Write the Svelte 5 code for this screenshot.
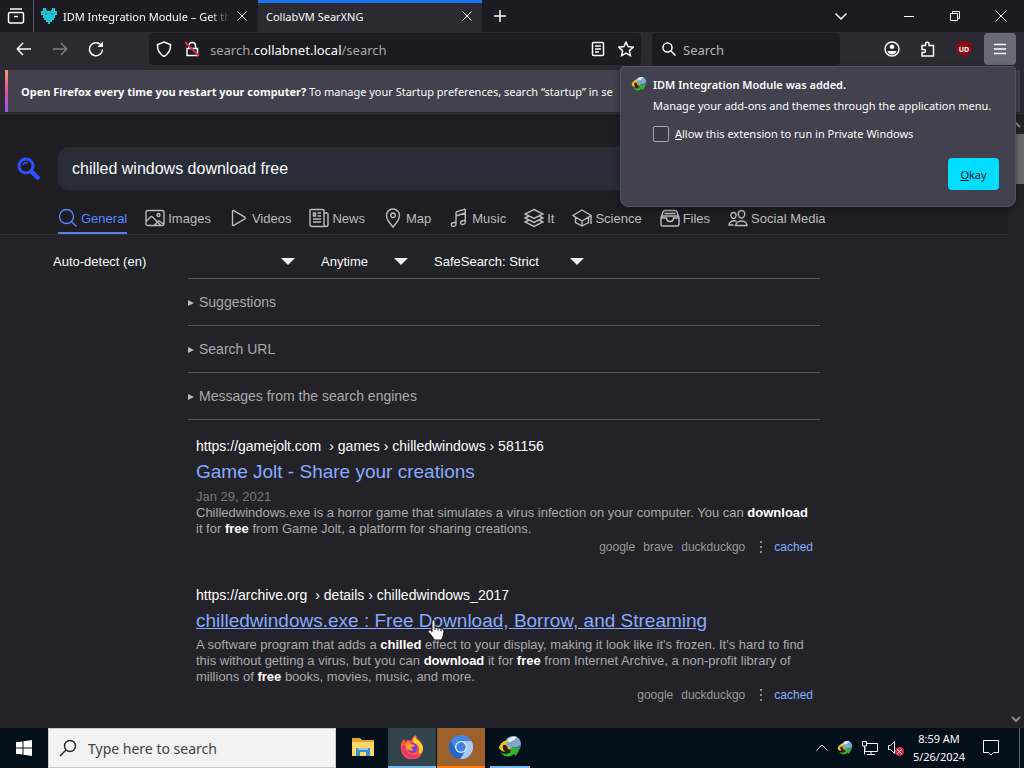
<script lang="ts">
  const categories = [
    { id: 'general', label: 'General' },
    { id: 'images', label: 'Images' },
    { id: 'videos', label: 'Videos' },
    { id: 'news', label: 'News' },
    { id: 'map', label: 'Map' },
    { id: 'music', label: 'Music' },
    { id: 'it', label: 'It' },
    { id: 'science', label: 'Science' },
    { id: 'files', label: 'Files' },
    { id: 'social', label: 'Social Media' }
  ];

  // stroke paths on a 20x20 grid
  const icons: Record<string, string> = {
    general: 'M8.5 1.5a7 7 0 1 0 0 14a7 7 0 0 0 0-14zM13.5 13.5l5 5',
    images: 'M3 2.5h14q2 0 2 2v11q0 2-2 2H3q-2 0-2-2v-11q0-2 2-2zM13.5 5.5a1.5 1.5 0 1 0 0 3a1.5 1.5 0 0 0 0-3zM1.5 13l4-4q1-1 2 0l8 8M9 17.500l4-4q1-1 2 0l4 3',
    videos: 'M3.500 3.500v13q0 1.500 1.300.8l11-6.500q1-.8 0-1.600l-11-6.500Q3.500 2 3.500 3.500z',
    news: 'M15 18.500H3q-2 0-2-2v-14q0-1 1-1h12q1 0 1 1v14q0 2 2 2t2-2V6q0-1-1-1h-3M8.500 5H12M8.500 8H12M4 11h8M4 14h8M4.500 5h2v3h-2z',
    map: 'M10 1C6 1 3.500 4 3.500 7.300C3.500 12 10 19 10 19s6.500-7 6.500-11.700C16.500 4 14 1 10 1zM10 5a2.300 2.300 0 1 0 0 4.600A2.300 2.300 0 0 0 10 5z',
    music: 'M7 16V5q0-1 1-1.300l7.500-2.400q.8-.2.8.6V14M7 8l9.300-3M7 16q0 2-2 2.400T2.300 17T4.500 14.800L7 14M16.300 14q0 2-2 2.400T11.600 15T13.800 12.800L16.300 12',
    it: 'M10 1.500L19 6L10 10.500L1 6zM4 8.500L1 10l9 4.500L19 10l-3-1.500M4 12.500L1 14l9 4.500l9-4.500l-3-1.500',
    science: 'M1 7.500L10 2l9 5.500L10 13zM3.500 9v5.500L10 18l6.500-3.500V9M19 7.500V16M10 13v5',
    files: 'M3 8h14q2 0 2 2v6q0 2-2 2H3q-2 0-2-2v-6q0-2 2-2zM1 10h5.500q0 3.500 3.500 3.500t3.500-3.500H19M1 10l2-6q.5-1.500 2-1.500h10q1.500 0 2 1.500l2 6M4.500 5.500h11',
    social: 'M13.500 2.500c-2 0-3.300 1.500-3.200 3.500s1.500 4 3.200 4s3-2 3.200-4s-1.200-3.500-3.200-3.500zM7.500 17.500h11.500c0-3-3-4.500-5.500-4.500s-5.500 1.500-6 4.500zM5.500 4.500c-1.700 0-2.700 1.200-2.600 2.800S4.200 10.500 5.500 10.500s2.500-1.600 2.600-3.200S7.200 4.500 5.500 4.500zM8.500 13.300C5 12 1 13.500 1 17h4.500'
  };

  const details = ['Suggestions', 'Search URL', 'Messages from the search engines'];

  const results = [
    {
      host: 'https://gamejolt.com',
      path: '› games › chilledwindows › 581156',
      title: 'Game Jolt - Share your creations',
      date: 'Jan 29, 2021',
      hovered: false,
      text: [
        ['Chilledwindows.exe is a horror game that simulates a virus infection on your computer. You can ', '*download'],
        ['it for ', '*free', ' from Game Jolt, a platform for sharing creations.']
      ],
      engines: ['google', 'brave', 'duckduckgo']
    },
    {
      host: 'https://archive.org',
      path: '› details › chilledwindows_2017',
      title: 'chilledwindows.exe : Free Download, Borrow, and Streaming',
      date: '',
      hovered: true,
      text: [
        ['A software program that adds a ', '*chilled', " effect to your display, making it look like it's frozen. It's hard to find"],
        ['this without getting a virus, but you can ', '*download', ' it for ', '*free', ' from Internet Archive, a non-profit library of'],
        ['millions of ', '*free', ' books, movies, music, and more.']
      ],
      engines: ['google', 'duckduckgo']
    }
  ];

  let query = 'chilled windows download free';
  let allowPrivate = false;
</script>

{#snippet idm(size: number)}
  <svg width={size} height={size} viewBox="0 0 24 24">
    <circle cx="15" cy="9" r="8" fill="#7fa6cc" />
    <path d="M9 5q5-5 10-3q-4 5-9 5z" fill="#e8f1fa" />
    <path d="M14 12q6 1 9-3q0 5-5 8q-3 0-4-5z" fill="#426d9c" />
    <path d="M1 12Q4 5 11 5q-3 2-3 5l6 4l-4 3Q1 17 1 12z" fill="#f0c51d" />
    <path d="M5 10q4-1 5 4l4 1l-5 3q-5-2-4-8z" fill="#34230b" />
    <path d="M2 17q6 4 12-1l-2-3l10 0l-4 8l-2-2q-7 6-14-2z" fill="#2fb72c" />
  </svg>
{/snippet}

{#snippet cross()}
  <svg class="line" width="12" height="12" viewBox="0 0 12 12"><path d="M1.500 1.500l9 9M10.500 1.500l-9 9" /></svg>
{/snippet}

<div class="desktop">
  <header class="tabbar">
    <button class="view" aria-label="Firefox View">
      <svg class="line thick" width="18" height="18" viewBox="0 0 18 18"><path d="M3 2h12M3 5.500h12q1.500 0 1.500 1.500v7q0 2-2 2h-11q-2 0-2-2V7q0-1.500 1.500-1.500zM7 9.500h4" /></svg>
    </button>
    <div class="tab">
      <svg width="16" height="16" viewBox="0 0 16 16"><path d="M2 0h3v2h1v1h4V2h1V0h3v3h2v4h-2v3h-1v2h-2v2h-2v2H7v-2H5v-2H3v-2H2V7H0V3h2z" fill="#1fc4cf" /><path d="M4 5h2v2H4zM10 5h2v2h-2z" fill="#138f9c" /></svg>
      <span class="tab-title fade">IDM Integration Module – Get th</span>
      <button aria-label="Close tab">{@render cross()}</button>
    </div>
    <div class="tab active">
      <span class="tab-title">CollabVM SearXNG</span>
      <button aria-label="Close tab">{@render cross()}</button>
    </div>
    <button class="new-tab" aria-label="New tab">
      <svg class="line thick" width="14" height="14" viewBox="0 0 14 14"><path d="M7 1v12M1 7h12" /></svg>
    </button>
    <div class="window-buttons">
      <button aria-label="List all tabs"><svg class="line thick" width="14" height="14" viewBox="0 0 14 14"><path d="M1.500 4.500L7 10l5.500-5.500" /></svg></button>
      <button aria-label="Minimize"><svg class="line" width="10" height="10" viewBox="0 0 10 10"><path d="M0 5.500h10" /></svg></button>
      <button aria-label="Restore"><svg class="line" width="12" height="12" viewBox="0 0 12 12"><path d="M1.500 3.500h7v7h-7zM3.500 3.500v-2h7v7h-2" /></svg></button>
      <button aria-label="Close"><svg class="line" width="12" height="12" viewBox="0 0 12 12"><path d="M.5.5l11 11M11.500.5l-11 11" /></svg></button>
    </div>
  </header>

  <div class="toolbar">
    <div class="nav-buttons">
      <button aria-label="Back"><svg class="line thick" width="16" height="16" viewBox="0 0 16 16"><path d="M15 8H1.500M7 2L1.200 8L7 14" /></svg></button>
      <button aria-label="Forward" disabled><svg class="line thick" width="16" height="16" viewBox="0 0 16 16"><path d="M1 8h13.500M9 2l5.800 6L9 14" /></svg></button>
      <button aria-label="Reload"><svg class="line thick" width="16" height="16" viewBox="0 0 16 16"><path d="M14.500 8.500a6.500 6.500 0 1 1-2-5l2 2" /><path d="M15 .5v5.500H9.500z" fill="#fbfbfe" stroke="none" /></svg></button>
    </div>
    <div class="urlbar">
      <svg class="line thick" width="16" height="16" viewBox="0 0 16 16"><path d="M8 1l6.500 2.500q.5 8-6.500 12q-7-4-6.500-12z" /></svg>
      <svg class="line" width="16" height="16" viewBox="0 0 16 16"><path class="thick" d="M3 7.500h10.500v7H3zM5 7V4.500q0-3 3.200-3t3.300 3V7" /><path d="M1 1l14 14" stroke="#e22850" stroke-width="2" /></svg>
      <span class="address">search.<b>collabnet.local</b>/search</span>
      <svg class="line thick" width="16" height="16" viewBox="0 0 16 16"><path d="M3.500 1.500h9q1 0 1 1v11q0 1-1 1h-9q-1 0-1-1v-11q0-1 1-1zM5 5h6M5 8h6M5 11h4" /></svg>
      <svg class="line thick" width="16" height="16" viewBox="0 0 16 16"><path d="M8 1l2.100 4.600l5 .6l-3.700 3.400l1 5L8 12.100l-4.400 2.500l1-5L.9 6.200l5-.6z" /></svg>
    </div>
    <label class="searchbar">
      <svg class="line thick" width="14" height="14" viewBox="0 0 14 14"><path d="M5.500 1a4.500 4.500 0 1 0 0 9a4.500 4.500 0 0 0 0-9zM9 9l4.500 4.500" /></svg>
      <input type="text" placeholder="Search" aria-label="Search" />
    </label>
    <div class="toolbar-end">
      <button aria-label="Account"><svg class="line thick" width="16" height="16" viewBox="0 0 16 16"><circle cx="8" cy="8" r="7" /><path d="M8 3.500a2.300 2.300 0 1 0 0 4.600a2.300 2.300 0 0 0 0-4.600zM3.500 10h9q-1 3.500-4.500 3.500T3.500 10z" fill="#fbfbfe" stroke="none" /></svg></button>
      <button aria-label="Extensions"><svg class="line thick" width="16" height="16" viewBox="0 0 16 16"><path d="M5.500 4.500V3q0-1.800 1.800-1.800T9 3v1.500h4.500v10.500H2v-3.500h2q1.500 0 1.500-1.500T4 8.500H2v-4z" /></svg></button>
      <button aria-label="uBlock Origin">
        <span class="ublock">UD</span>
      </button>
      <button class="menu" aria-label="Menu"><svg class="line thick" width="14" height="14" viewBox="0 0 14 14"><path d="M1 2.500h12M1 7h12M1 11.500h12" /></svg></button>
    </div>

    <section class="popup">
      {@render idm(16)}
      <div class="popup-body">
        <strong>IDM Integration Module was added.</strong>
        <p>Manage your add-ons and themes through the application menu.</p>
        <label><input type="checkbox" bind:checked={allowPrivate} /><span><u>A</u>llow this extension to run in Private Windows</span></label>
        <button class="okay"><span><u>O</u>kay</span></button>
      </div>
    </section>
  </div>

  <div class="infobar">
    <div class="message"><b>Open Firefox every time you restart your computer?</b> To manage your Startup preferences, search “startup” in se</div>
  </div>

  <div class="viewport">
    <div class="page">
      <div class="search-header">
        <div class="search-row">
          <svg width="24" height="24" viewBox="0 0 24 24" fill="none" stroke="#3050ff"><circle cx="9" cy="9" r="7" stroke-width="3" /><path d="M6 8q1-3 5-2.500" stroke-width="1.500" /><path d="M14.500 14.500l7.500 7.500" stroke-width="4.500" /></svg>
          <input type="text" aria-label="Search query" bind:value={query} />
        </div>
        <nav>
          {#each categories as cat}
            <a href="#{cat.id}" class:selected={cat.id === 'general'}>
              <svg width="20" height="20" viewBox="0 0 20 20"><path d={icons[cat.id]} /></svg>
              {cat.label}
            </a>
          {/each}
        </nav>
      </div>

      <div class="filters">
        <select class="language" aria-label="Language"><option>Auto-detect (en)</option></select>
        <select class="time" aria-label="Time range"><option>Anytime</option></select>
        <select class="safe" aria-label="SafeSearch"><option>SafeSearch: Strict</option></select>
      </div>

      <main>
        {#each details as item}
          <details><summary>{item}</summary></details>
        {/each}

        {#each results as result}
          <article>
            <a class="url" href="#result"><span>{result.host}</span><span>{result.path}</span></a>
            <h3 class:hovered={result.hovered}><a href="#result">{result.title}</a></h3>
            {#if result.date}<time>{result.date}</time>{/if}
            <p>
              {#each result.text as line}
                <span class="row">{#each line as part}{#if part[0] === '*'}<b>{part.slice(1)}</b>{:else}{part}{/if}{/each}</span>
              {/each}
            </p>
            <div class="engines">
              {#each result.engines as engine}<span>{engine}</span>{/each}
              <svg width="4" height="12" viewBox="0 0 4 12" fill="#8a8a90"><path d="M1 0h2v2H1zM1 5h2v2H1zM1 10h2v2H1z" /></svg>
              <a href="#cached">cached</a>
            </div>
          </article>
        {/each}
      </main>
    </div>
    <div class="scrollbar">
      <svg class="line" width="10" height="6" viewBox="0 0 10 6"><path d="M1 5l4-4l4 4" /></svg>
      <div class="thumb"></div>
      <svg class="line" width="10" height="6" viewBox="0 0 10 6"><path d="M1 1l4 4l4-4" /></svg>
    </div>
  </div>

  <footer class="taskbar">
    <button class="start" aria-label="Start"><svg width="16" height="16" viewBox="0 0 16 16" fill="#fff"><path d="M0 2.300L6.500 1.400V7.500H0zM7.500 1.200L16 0v7.500H7.500zM0 8.500h6.500v6.100L0 13.700zM7.500 8.500H16V16l-8.500-1.200z" /></svg></button>
    <label class="task-search">
      <svg width="18" height="18" viewBox="0 0 18 18" fill="none" stroke="#222" stroke-width="1.400"><circle cx="11" cy="7" r="5.500" /><path d="M7 11l-6 6" /></svg>
      <input type="text" placeholder="Type here to search" aria-label="Type here to search" />
    </label>
    <div class="apps">
      <button aria-label="File Explorer">
        <svg width="24" height="24" viewBox="0 0 24 24"><path d="M1 3h8l2 2h12v5H1z" fill="#e3a72f" /><path d="M1 7h22v14H1z" fill="#fbd867" /><path d="M5 13h14v8h-4v-4H9v4H5z" fill="#3c8fd0" /><path d="M7 13h10v2H7z" fill="#8cc8ec" /></svg>
      </button>
      <button class="firefox" aria-label="Firefox">
        <svg width="24" height="24" viewBox="0 0 24 24"><path d="M4 4l1 3q2-2 4-2l2 1q1-4 5-6q0 3 3 5q4 4 4 8A11 11 0 0 1 1 14q-1-6 3-10z" fill="#ff5a36" /><path d="M15 1q1 4 4 5q4 4 4 8q-1 6-6 8q3-4 2-9q-1-4-5-5q-2-3 1-7z" fill="#ffcd35" /><path d="M1.500 12q1 10 11 11.500q6 0 9-6q-5 4-10 2Q5 18 5 10q-2 0-3.500 2z" fill="#f0327c" /><circle cx="12.500" cy="13" r="5" fill="#7542d8" /><path d="M5 9q4-2 6 0l4 1q-1 3-4 2q0 2 3 3q-4 2-7-1z" fill="#ff9a2e" /></svg>
      </button>
      <button class="chromium" aria-label="Chromium">
        <svg width="24" height="24" viewBox="0 0 24 24"><circle cx="12" cy="12" r="12" fill="#4587e8" /><path d="M12 6h10.400A12 12 0 0 1 11 24l6-9z" fill="#a9cbfb" /><path d="M1.700 6A12 12 0 0 0 11 24l5-8l-9-1z" fill="#2765c9" /><circle cx="12" cy="12" r="6" fill="#dceafd" /><circle cx="12" cy="12" r="4.700" fill="#3f83e6" /></svg>
      </button>
      <button class="running" aria-label="Internet Download Manager">{@render idm(24)}</button>
    </div>
    <div class="tray">
      <svg class="line" width="14" height="14" viewBox="0 0 14 14"><path d="M1.500 9.500L7 4l5.500 5.500" /></svg>
      {@render idm(16)}
      <svg class="line" width="18" height="16" viewBox="0 0 18 16"><path d="M5 3.500h11.500v8H4V7M1.500 1.500h4V6h-4zM3.500 6v8.500M10 11.500v3M6 14.500h8" /></svg>
      <svg class="line" width="18" height="16" viewBox="0 0 18 16"><path d="M1.500 5.500h2l4-4v12l-4-4h-2z" /><circle cx="12.500" cy="11.500" r="4.500" fill="#d9304a" stroke="none" /><path d="M10.500 9.500l4 4M14.500 9.500l-4 4" /></svg>
      <time class="clock"><span>8:59 AM</span><span>5/26/2024</span></time>
      <svg class="line" width="18" height="18" viewBox="0 0 18 18"><path d="M1.500 1.500h15v12h-5L9 16l-2.500-2.500h-5z" /></svg>
    </div>
    <button class="show-desktop" aria-label="Show desktop"></button>
  </footer>

  <svg class="cursor" width="18" height="22" viewBox="0 0 18 22"><path d="M5 1.500q1.500-1.500 3 0V8l6.500 1.500q2.500.5 2.500 3l-1 5l-1.500 3.500H7L5.500 18L1 12.500q0-2.500 2.500-1.500L5 12.500z" fill="#fff" stroke="#111" /><path d="M8 8v3M11 9v2.500M14 10v2" stroke="#111" /></svg>
</div>

<style>
  :global(body) { margin: 0; background: #222228; }
  * { box-sizing: border-box; }
  button, input, select { font: inherit; color: inherit; border: 0; padding: 0; background: none; outline: none; }
  button { display: flex; align-items: center; justify-content: center; }
  svg { flex: none; }
  .line { fill: none; stroke: #fbfbfe; stroke-width: 1; }
  .thick { stroke-width: 1.5; }

  .desktop { position: relative; height: 100vh; display: flex; flex-direction: column; overflow: hidden; color: #fbfbfe; font-family: "Noto Sans", "Open Sans", sans-serif; font-size: 11px; }

  .tabbar { flex: none; height: 32px; display: flex; background: #1c1b22; }
  .view { width: 34px; padding-right: 1px; border-right: 1px solid #5b5b66; }
  .tab { width: 224px; display: flex; align-items: center; gap: 6px; padding: 0 10px 0 7px; }
  .tab.active { background: #2b2a33; border-top: 3px solid #1a73f0; padding: 0 9px 3px 8px; }
  .tab-title { flex: 1; min-width: 0; overflow: hidden; white-space: nowrap; }
  .fade { mask-image: linear-gradient(to right, #000 88%, transparent); }
  .new-tab { width: 36px; }
  .window-buttons { margin-left: auto; display: flex; }
  .window-buttons button { width: 46px; }
  .window-buttons button:first-child { margin-right: 22px; }

  .toolbar { position: relative; flex: none; height: 34px; display: flex; align-items: center; background: #2b2a33; }
  .nav-buttons { display: flex; padding-left: 6px; }
  .nav-buttons button { width: 36px; height: 32px; }
  .nav-buttons button:disabled { opacity: 0.4; }
  .urlbar { flex: 1; height: 32px; margin-left: 35px; padding: 0 7px; display: flex; align-items: center; gap: 12px; background: #1c1b22; border-radius: 4px; }
  .address { flex: 1; margin-left: -2px; padding-top: 1px; color: #a5a5ad; font-size: 13px; }
  .address b { color: #fbfbfe; font-weight: 400; }
  .searchbar { width: 188px; height: 32px; margin-left: 11px; padding: 0 10px; display: flex; align-items: center; gap: 7px; background: #1c1b22; border-radius: 4px; }
  .searchbar input { min-width: 0; flex: 1; padding-top: 1px; font-size: 13px; }
  .searchbar input::placeholder { color: #b4b4bc; opacity: 1; }
  .toolbar-end { display: flex; padding: 0 8px 0 34px; }
  .toolbar-end button { width: 36px; height: 32px; }
  .toolbar-end .menu { width: 32px; margin-left: 2px; background: #6a6a74; border-radius: 4px; }
  .ublock { width: 16px; height: 16px; display: flex; align-items: center; justify-content: center; background: #8d0b10; clip-path: polygon(50% 0, 100% 15%, 95% 70%, 50% 100%, 5% 70%, 0 15%); font-size: 7px; font-weight: 700; }

  .popup { position: absolute; z-index: 2; top: 34px; right: 8px; width: 396px; height: 141px; display: flex; gap: 6px; padding: 9px 11px 11px 10px; background: #42414d; border: 1px solid #53525e; border-radius: 4px 4px 8px 8px; box-shadow: 0 2px 6px rgba(0, 0, 0, 0.4); }
  .popup-body { flex: 1; display: flex; flex-direction: column; line-height: 17px; white-space: nowrap; }
  .popup strong { font-weight: 600; }
  .popup p { margin: 4px 0 11px; }
  .popup label { display: flex; align-items: center; gap: 6px; }
  .popup input { appearance: none; width: 16px; height: 16px; margin: 0; border: 1px solid #a4a4ac; border-radius: 2px; background: #3a3944; }
  .okay { align-self: flex-end; width: 51px; height: 32px; margin: 16px 5px 0 0; background: #0df; color: #15141a; border-radius: 4px; }

  .infobar { flex: none; padding: 4px 4px 3px 5px; background: #2b2a33; border-bottom: 1px solid #18181c; }
  .message { height: 42px; padding: 1px 0 0 13px; line-height: 41px; white-space: nowrap; overflow: hidden; background: #42414d; border-left: 3px solid; border-image: linear-gradient(#f0a070, #e0529c 50%, #9059ff) 1; }

  .viewport { flex: 1; min-height: 0; display: flex; font-family: "Liberation Sans", Arial, sans-serif; }
  .page { flex: 1; min-width: 0; overflow: hidden; background: #222228; }
  .search-header { background: #1e1e22; border-bottom: 1px solid #303036; padding-top: 31px; }
  .search-row { display: flex; align-items: center; gap: 17px; padding: 0 12px 0 17px; }
  .search-row input { flex: 1; height: 43px; padding: 0 14px; background: #282c37; border-radius: 10px; font-size: 16px; }
  nav { display: flex; gap: 18px; padding: 14px 0 0 58px; }
  nav a { height: 30px; display: flex; align-items: center; gap: 3px; color: #bbb; font-size: 13px; text-decoration: none; white-space: nowrap; border-bottom: 2px solid transparent; }
  nav svg { fill: none; stroke: #bbb; stroke-width: 1.4; }
  nav .selected { color: #58f; border-color: #5a80e8; }
  nav .selected svg { stroke: #58f; }

  .filters { display: flex; gap: 26px; padding: 16px 0 6px 53px; }
  .filters select { appearance: none; height: 21px; font-size: 13px; background: url("data:image/svg+xml,%3Csvg xmlns='http://www.w3.org/2000/svg' width='14' height='7'%3E%3Cpath d='M0 0h14L7 7z' fill='%23eee'/%3E%3C/svg%3E") no-repeat right center; }
  .language { width: 242px; }
  .time { width: 87px; }
  .safe { width: 150px; }

  main { max-width: 820px; padding-left: 188px; }
  details { height: 47px; border-top: 1px solid #55555b; color: #aaa; font-size: 14px; line-height: 47px; }
  summary { display: flex; align-items: center; gap: 5px; }
  summary::before { content: ""; border: solid transparent; border-width: 3px 0 3px 6px; border-left-color: #bbb; }
  details + article { border-top: 1px solid #55555b; }
  article { padding: 16px 7px 14px 8px; }
  .url { display: flex; gap: 8px; color: #fff; font-size: 14px; line-height: 20px; text-decoration: none; }
  h3 { margin: 3px 0; font-size: 19px; font-weight: 400; line-height: 26px; white-space: nowrap; }
  h3 a { color: #8af; text-decoration: none; }
  h3.hovered a { text-decoration: underline; }
  article time { display: block; padding-top: 1px; color: #77777d; font-size: 13px; line-height: 16px; }
  article p { margin: 0; color: #aaa; font-size: 13px; line-height: 16px; }
  .row { display: block; white-space: nowrap; }
  .row b { color: #fff; }
  .engines { display: flex; align-items: center; justify-content: flex-end; gap: 8px; margin-top: 2px; color: #999; font-size: 12px; line-height: 16px; }
  .engines svg { margin: 0 3px 0 6px; }
  .engines a { color: #8af; text-decoration: none; }

  .scrollbar { flex: none; width: 16px; padding: 6px 0; display: flex; flex-direction: column; align-items: center; background: #222228; }
  .scrollbar .line { stroke: #8a8a90; stroke-width: 2; }
  .thumb { width: 16px; height: 50px; margin: 6px 0 auto; background: #6a6a6c; }

  .taskbar { flex: none; height: 40px; display: flex; align-items: stretch; background: #03101a; }
  .start { width: 48px; }
  .task-search { width: 288px; display: flex; align-items: center; gap: 11px; padding-left: 10px; background: #f2f2f2; border: 1px solid #c9c9c9; color: #444; font-size: 14px; }
  .task-search input { flex: 1; min-width: 0; }
  .task-search input::placeholder { color: #444; opacity: 1; }
  .apps { display: flex; gap: 1px; padding-left: 3px; }
  .apps button { width: 48px; border-bottom: 2px solid transparent; }
  .apps .firefox { background: #34444e; border-color: #76b9ed; }
  .apps .chromium { background: #9c602a; border-color: #ff7a10; }
  .apps .running { border-color: #76b9ed; width: 40px; margin-left: 4px; }
  .tray { margin-left: auto; display: flex; align-items: center; gap: 8px; padding-right: 19px; }
  .clock { width: 52px; margin-right: 9px; display: flex; flex-direction: column; align-items: center; line-height: 18px; }
  .show-desktop { width: 5px; border-left: 1px solid #5d666d; }

  .cursor { position: absolute; left: 427px; top: 619px; }
</style>
